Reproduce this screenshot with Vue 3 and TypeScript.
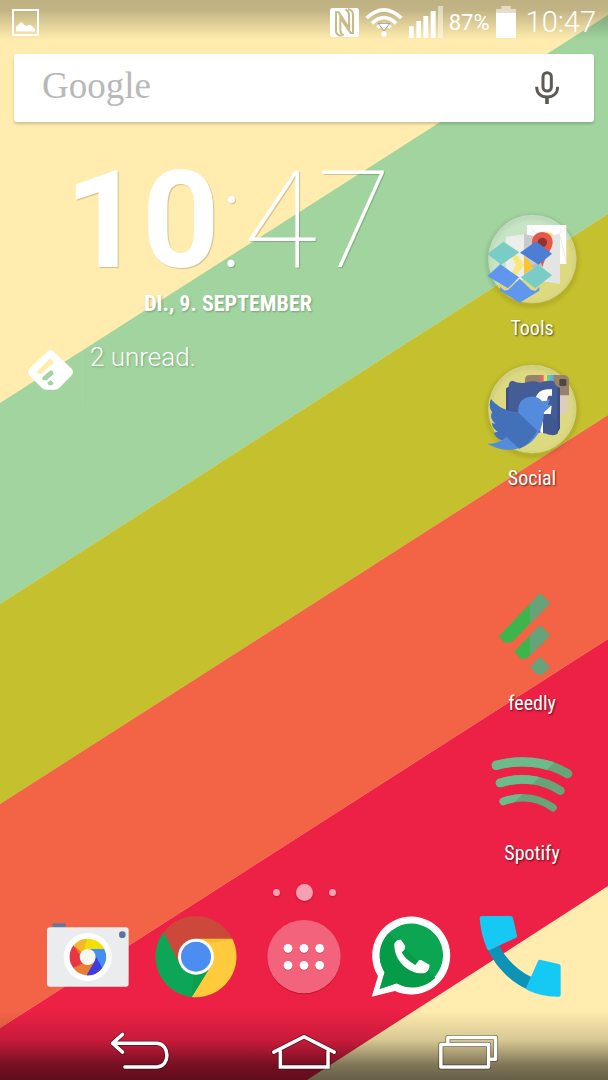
<script setup lang="ts">
import { ref } from 'vue'

const time = { hours: '10', minutes: '47' }
const battery = 87
const query = ref('')
const activePage = ref(1)
</script>

<template>
  <main class="screen">
    <svg class="wallpaper" viewBox="0 0 608 1080" preserveAspectRatio="none" aria-hidden="true">
      <rect width="608" height="1080" fill="#ffecae" />
      <path d="M0 403 608 15V214L0 604Z" fill="#a1d49e" />
      <path d="M0 604 608 214V415L0 804Z" fill="#c5c02d" />
      <path d="M0 804 608 415V639L0 1028Z" fill="#f36447" />
      <path d="M0 1028 608 639V886L307 1080H0Z" fill="#ed2045" />
    </svg>

    <header class="status">
      <svg class="status-picture" viewBox="0 0 27 27" aria-label="Screenshot saved">
        <rect x="1" y="1" width="25" height="25" fill="none" stroke="#fff" stroke-width="2" />
        <path d="M4 22V18L9 13 14 17 18 15.500 23 20V22.500H4Z" fill="#fff" />
      </svg>
      <span class="status-gap"></span>
      <svg class="status-nfc" viewBox="0 0 87 87" aria-label="NFC">
        <rect width="87" height="87" rx="8" fill="#fff" />
        <g fill="none" stroke="#c9b987" stroke-width="6">
          <path d="M35 83Q18 82 18 68V13H26L57 60V20Q56 8 46 4" />
          <path d="M54 4Q69 7 69 20V75H62L31 30V66Q31 77 41 82" />
        </g>
      </svg>
      <svg class="status-wifi" viewBox="0 0 114 90" aria-label="Wi-Fi">
        <g fill="none" stroke="#fff" stroke-width="11">
          <path d="M5 33Q57-16 109 33" />
          <path d="M21 49Q57 15 93 49" />
          <path d="M37 62Q57 42 77 62" />
        </g>
        <path d="M40 49H74L57 72Z" fill="#fff" stroke="#777064" stroke-width="2" />
        <circle cx="57" cy="81" r="8" fill="#fff" />
      </svg>
      <svg class="status-signal" viewBox="0 0 102 96" aria-label="Signal">
        <path fill="#fff" d="M0 61H14V96H0ZM22 45H36V96H22ZM43 30H58V96H43ZM65 15H80V96H65Z" />
        <path fill="#fff" fill-opacity=".5" d="M87 0H102V96H87Z" />
      </svg>
      <span class="status-percent">{{ battery }}%</span>
      <svg class="status-battery" viewBox="0 0 60 96" aria-label="Battery">
        <path fill="#fff" fill-opacity=".55" d="M16 0H44V9H60V21H0V9H16Z" />
        <path fill="#fff" d="M0 21H60V96H0Z" />
      </svg>
      <time class="status-time">{{ time.hours }}:{{ time.minutes }}</time>
    </header>

    <form class="search" role="search" @submit.prevent>
      <input v-model="query" class="search-input" type="text" placeholder="Google" aria-label="Google" />
      <button class="search-mic" type="button" aria-label="Voice search">
        <svg viewBox="0 0 72 102" aria-hidden="true">
          <g fill="none" stroke="#5d5b54" stroke-width="9">
            <rect x="24" y="5" width="25" height="55" rx="12" />
            <path d="M5 47C5 68 18 78 36 78S68 68 68 47" />
            <path d="M36 78V99" stroke-width="11" />
          </g>
        </svg>
      </button>
    </form>

    <div class="workspace">
      <section class="widgets">
        <time class="clock"><b>{{ time.hours }}</b><span>:{{ time.minutes }}</span></time>
        <p class="date">DI., 9. SEPTEMBER</p>
        <a class="unread" href="#feedly">
          <span class="unread-icon">
            <svg viewBox="0 0 136 120" aria-hidden="true">
              <path fill="#fff" fill-rule="evenodd" d="M58 5Q68-4 78 5L132 56Q140 66 132 76L95 114Q89 120 81 120H55Q47 120 41 114L4 76Q-4 66 4 56ZM65 27 28 64Q26 69 31 72H40L77 39Q76 28 65 27ZM68 60 43 83Q42 89 47 91H56L77 73Q77 61 68 60ZM68 90 58 99 63 106H73L78 99Z" />
            </svg>
          </span>
          <span class="unread-text">2 unread.</span>
        </a>
      </section>

      <nav class="shortcuts" aria-label="Shortcuts">
        <div class="group">
          <button class="shortcut" type="button">
            <svg viewBox="36 30 300 300" aria-hidden="true">
              <circle class="folder-shade" cx="187" cy="183" r="133" />
              <circle class="folder" cx="187" cy="177" r="132" />
              <path d="M171 75H289V192H171Z" fill="#fff" />
              <path d="M182 84 230 128 289 84M270 108 289 187" fill="none" stroke="#e1e3da" stroke-width="2" />
              <path d="M108 110 162 103V238L108 250Z" fill="#eceee9" />
              <path d="M162 103 216 112V246L162 238Z" fill="#cacaca" />
              <path d="M216 112 270 103V252L216 244Z" fill="#e4e4e2" />
              <path d="M124 166H143L163 195 139 225H122L138 196Z" fill="#fae779" />
              <path d="M162 168 193 202 162 221Z" fill="#fac42e" />
              <path d="M181 199 207 185V209Z" fill="#b7bac0" />
              <path d="M226 98Q240 94 251 105L239 113Z" fill="#f9df59" />
              <path d="M217 96C200 96 186 109 186 126C186 149 208 166 217 202C226 166 248 149 248 126C248 109 234 96 217 96Z" fill="#e65849" />
              <circle cx="217" cy="127" r="14" fill="#91332f" />
              <path d="M52 162 100 125 148 157 94 194ZM152 232 206 194 246 226 196 265Z" fill="#79cdc6" />
              <path d="M150 158 198 124 246 161 206 194Z" fill="#4b7fd3" />
              <path d="M52 228 91 193 147 232 114 265ZM149 236 183 269 196 273 208 261V272L149 308 90 272V261L104 272 115 269Z" fill="#5f97ee" />
            </svg>
            <span>Tools</span>
          </button>
          <button class="shortcut" type="button">
            <svg viewBox="36 30 300 300" aria-hidden="true">
              <circle class="folder-shade" cx="187" cy="183" r="133" />
              <circle class="folder" cx="187" cy="177" r="132" />
              <rect x="165" y="75" width="131" height="117" rx="14" fill="#ddceb8" />
              <path d="M165 90Q165 75 180 75H281Q296 75 297 90V136H165Z" fill="#98836a" />
              <path d="M211 75H221V94H211Z" fill="#ec6471" />
              <path d="M221 75H231V94H221Z" fill="#e9df65" />
              <path d="M231 75H240V94H231Z" fill="#63ce98" />
              <path d="M240 75H250V94H240Z" fill="#62afe5" />
              <rect x="268" y="87" width="21" height="21" rx="4" fill="#50483f" />
              <path d="M108 119Q108 113 116 111Q115 94 128 92Q147 102 165 98Q190 90 209 98Q234 90 252 93Q257 111 270 113V235Q264 239 262 251Q251 258 242 254Q222 252 215 247Q174 258 134 248Q119 250 119 238Q108 235 108 224Z" fill="#455d97" />
              <path d="M116 111V241Q108 235 108 224V119Q108 113 116 111ZM262 111 270 114V235L262 249Z" fill="#3b4e86" />
              <path d="M211 247V192H196V168H195Q192 118 237 118H246V137H238Q232 138 232 149V168H245L242 192H232V253Z" fill="#fff" />
              <path d="M219 192H242L262 215 262 251Q251 258 219 249Z" fill="#405792" />
              <path d="M52 281Q78 282 96 271Q77 264 72 249L84 245Q67 235 66 219Q71 222 77 222Q57 203 67 187Q54 169 63 148Q91 183 145 188Q142 145 181 140Q205 138 216 154Q231 154 241 147Q237 161 229 168L246 163Q237 176 222 187C220 237 195 286 139 297Q92 305 52 281Z" fill="#548bdc" />
              <path d="M63 148Q91 183 145 188L202 242Q177 286 148 296L109 261 96 271Q77 264 72 249L84 245Q67 235 66 219L77 222Q57 203 67 187Q54 169 63 148Z" fill="#4270b9" />
            </svg>
            <span>Social</span>
          </button>
        </div>
        <div class="group">
          <button class="shortcut" type="button">
            <svg viewBox="36 15 300 300" aria-hidden="true">
              <path d="M86 169 207 43Q210 39 214 43L240 70 129 183Q123 188 115 188H108Q102 188 99 184ZM133 214 205 140Q210 135 215 140L240 166 175 231Q169 237 162 236H156Q150 236 146 231Z" fill="#3eb54b" />
              <path d="M180 71 207 43Q210 39 214 43L240 70 180 131ZM180 166 205 140Q210 135 215 140L240 166 180 226ZM180 261 206 234Q210 230 214 234L240 261 223 279Q219 284 213 284H206Q200 284 196 279Z" fill="#66a37b" />
            </svg>
            <span>feedly</span>
          </button>
          <button class="shortcut" type="button">
            <svg viewBox="36 -15 300 300" aria-hidden="true">
              <g fill="none" stroke-linecap="round" stroke="#65a578">
                <path d="M79 76C149 57 228 63 293 101" stroke-width="28" />
                <path d="M90 129C153 109 218 117 271 152" stroke-width="26" />
                <path d="M100 184C154 165 205 172 249 203" stroke-width="23" />
              </g>
              <clipPath id="spotify-light">
                <path d="M50 40H280L120 200H50Z" />
              </clipPath>
              <g fill="none" stroke-linecap="round" stroke="#6dbb8a" clip-path="url(#spotify-light)">
                <path d="M79 76C149 57 228 63 293 101" stroke-width="28" />
                <path d="M90 129C153 109 218 117 271 152" stroke-width="26" />
                <path d="M100 184C154 165 205 172 249 203" stroke-width="23" />
              </g>
            </svg>
            <span>Spotify</span>
          </button>
        </div>
      </nav>
    </div>

    <div class="pages" role="group" aria-label="Pages">
      <button
        v-for="(page, i) in 3"
        :key="page"
        class="page"
        :class="{ active: i === activePage }"
        type="button"
        :aria-label="`Page ${page}`"
        @click="activePage = i"
      ></button>
    </div>

    <nav class="dock" aria-label="Dock">
      <button type="button" aria-label="Camera">
        <svg viewBox="39 126 270 270" aria-hidden="true">
          <path d="M68 160H107V175H68Z" fill="#65779e" />
          <rect x="51" y="172" width="245" height="178" rx="9" fill="#eaecee" />
          <circle cx="277" cy="194" r="10" fill="#61739c" />
          <circle cx="173" cy="261" r="72" fill="#fff" />
          <circle cx="173" cy="261" r="50" fill="#e97d31" />
          <path d="M173 261 131 226A55 55 0 0 1 171 206L173 238Z" fill="#f4b82b" />
          <path d="M162 239 171 206A55 55 0 0 1 224 238H173Z" fill="#f3df04" />
          <path d="M173 237H223A55 55 0 0 1 217 294L194 261Z" fill="#438ff2" />
          <path d="M195 254 217 294A55 55 0 0 1 169 316L190 278Z" fill="#403ce0" />
          <path d="M195 272 169 316A55 55 0 0 1 130 294L160 274Z" fill="#e97d31" />
          <path d="M166 276 130 294A55 55 0 0 1 131 226L155 264Z" fill="#e63745" />
          <circle cx="173" cy="261" r="24" fill="#f7f7f2" />
        </svg>
      </button>
      <button type="button" aria-label="Chrome">
        <svg viewBox="363 126 270 270" aria-hidden="true">
          <circle cx="498" cy="260" r="122" fill="#cc483a" />
          <path d="M498 206H607A122 122 0 0 1 485 381L544 285Z" fill="#ffca3b" />
          <path d="M401 187A122 122 0 0 0 485 381L544 285 498 312 447 278Z" fill="#0ca656" />
          <path d="M491 317 544 285 485 381Z" fill="#0ba04d" />
          <path d="M515 207H607L544 220Z" fill="#f4bf38" />
          <circle cx="498" cy="260" r="54" fill="#fff" />
          <circle cx="498" cy="260" r="45" fill="#4b8df1" />
        </svg>
      </button>
      <button type="button" aria-label="All apps">
        <svg viewBox="27 126 270 270" aria-hidden="true">
          <circle cx="162" cy="263" r="110" fill="#b91634" />
          <circle cx="162" cy="260" r="110" fill="#f3647c" />
          <g fill="#c84c60">
            <circle cx="114" cy="238" r="13" /><circle cx="162" cy="238" r="13" /><circle cx="209" cy="238" r="13" />
            <circle cx="114" cy="289" r="13" /><circle cx="162" cy="289" r="13" /><circle cx="209" cy="289" r="13" />
          </g>
          <g fill="#fff">
            <circle cx="114" cy="235" r="13" /><circle cx="162" cy="235" r="13" /><circle cx="209" cy="235" r="13" />
            <circle cx="114" cy="286" r="13" /><circle cx="162" cy="286" r="13" /><circle cx="209" cy="286" r="13" />
          </g>
        </svg>
      </button>
      <button type="button" aria-label="WhatsApp">
        <svg viewBox="351 126 270 270" aria-hidden="true">
          <path d="M365 380 384 318A117 117 0 1 1 435 363Z" fill="#fff" />
          <path d="M389 357 404 307A95 95 0 1 1 440 340Z" fill="#0ca552" />
          <path d="M389 357 404 307A95 95 0 0 1 416 190L556 323A95 95 0 0 1 440 340Z" fill="#069b49" />
          <path d="M433 221Q439 208 453 209L466 229 463 240 455 247Q466 269 496 285L507 271Q512 268 519 273L539 285Q539 300 525 309C489 317 431 281 433 221Z" fill="#fff" />
        </svg>
      </button>
      <button type="button" aria-label="Phone">
        <svg viewBox="45 126 270 270" aria-hidden="true">
          <path d="M83 238 119 229C138 268 174 301 214 321L200 357C153 338 105 288 83 238Z" fill="#0d93b8" />
          <path d="M65 138H152Q158 138 159 144L171 197Q172 201 168 203L90 240Q84 243 81 236Q62 192 59 144Q59 138 65 138ZM233 275Q236 268 243 270L296 282Q301 283 302 289V374Q302 380 296 380Q245 381 202 360Q196 357 199 352Z" fill="#15c9f4" />
        </svg>
      </button>
    </nav>

    <nav class="system" aria-label="System">
      <button type="button" aria-label="Back">
        <svg viewBox="271 52 180 129" aria-hidden="true">
          <g fill="none" stroke-linecap="round" stroke-linejoin="round">
            <path d="M316 89 290 112 316 135M290 112H405C439 114 439 173 405 173H322" stroke="#00000070" stroke-width="13" />
            <path d="M316 89 290 112 316 135M290 112H405C439 114 439 173 405 173H322" stroke="#fff" stroke-width="9" />
          </g>
        </svg>
      </button>
      <button type="button" aria-label="Home">
        <svg viewBox="694 52 180 129" aria-hidden="true">
          <g fill="none" stroke-linecap="round">
            <path d="M706 135 784 95 862 135M723 133V173H846V133" stroke="#00000070" stroke-width="13" />
            <path d="M706 135 784 95 862 135M723 133V173H846V133" stroke="#fff" stroke-width="9" />
          </g>
        </svg>
      </button>
      <button type="button" aria-label="Recent apps">
        <svg viewBox="1117 52 180 129" aria-hidden="true">
          <g fill="none" stroke-linejoin="round">
            <path d="M1137 115H1260V173H1137ZM1155 115V97H1278V153H1260" stroke="#00000070" stroke-width="13" />
            <path d="M1137 115H1260V173H1137ZM1155 115V97H1278V153H1260" stroke="#fff" stroke-width="9" />
          </g>
        </svg>
      </button>
    </nav>
  </main>
</template>

<style>
body {
  margin: 0;
}
</style>

<style scoped>
.screen {
  position: relative;
  isolation: isolate;
  display: flex;
  flex-direction: column;
  min-height: 100vh;
  overflow: hidden;
  color: #fff;
  font-family: Roboto, "Noto Sans", sans-serif;
}

.wallpaper {
  position: absolute;
  inset: 0;
  z-index: -1;
  width: 100%;
  height: 100%;
}

svg {
  display: block;
  flex: none;
}

button {
  padding: 0;
  border: 0;
  background: none;
  color: inherit;
  font: inherit;
  cursor: pointer;
}

.status {
  display: flex;
  align-items: center;
  gap: 6px;
  height: 44px;
  padding: 0 12px;
  background: linear-gradient(#00000040, #0000003d 10px, #00000000 40px);
  font-weight: 300;
}

.status-gap {
  flex: 1;
}

.status-picture {
  width: 27px;
  height: 27px;
}

.status-nfc {
  width: 29px;
  height: 29px;
}

.status-wifi {
  width: 38px;
  height: 30px;
}

.status-signal {
  width: 34px;
  height: 32px;
}

.status-percent {
  font-size: 22px;
  font-weight: 400;
}

.status-battery {
  width: 20px;
  height: 32px;
}

.status-time {
  margin-left: 4px;
  font-size: 29px;
}

.search {
  display: flex;
  align-items: center;
  height: 68px;
  margin: 10px 14px 0;
  border-radius: 3px;
  background: #fff;
  box-shadow: 0 2px 3px #00000030;
}

.search-input {
  flex: 1;
  min-width: 0;
  height: 60px;
  padding: 0 0 6px 28px;
  border: 0;
  outline: 0;
  background: none;
  color: #555;
  font: 37px "Liberation Serif", serif;
}

.search-input::placeholder {
  color: #b8b8b8;
  opacity: 1;
}

.search-mic {
  padding: 0 35px;
}

.search-mic svg {
  width: 24px;
  height: 34px;
}

.workspace {
  display: grid;
  grid-template-columns: 1fr 152px;
  flex: 1;
}

.widgets {
  padding-top: 39px;
}

.clock {
  display: block;
  font-size: 135px;
  line-height: 120px;
  text-align: center;
  text-shadow: 1px 1px 1px #00000030;
}

.clock b {
  font-weight: 700;
}

.clock span {
  font-weight: 100;
}

.date {
  margin: 9px 0 0;
  font: 700 22px/28px "Roboto Condensed", "Liberation Sans Narrow", Roboto, sans-serif;
  text-align: center;
  text-shadow: 1px 1px 2px #00000040;
}

.unread {
  display: flex;
  height: 72px;
  margin: 15px 16px 0 28px;
  color: inherit;
  text-decoration: none;
}

.unread-icon {
  padding: 17px 9px 0 0;
  border-right: 1px solid #ffffff10;
}

.unread-icon svg {
  width: 45px;
  height: 40px;
}

.unread-text {
  padding: 9px 0 0 7px;
  font-size: 26px;
  font-weight: 300;
  line-height: 30px;
  text-shadow: 1px 1px 2px #00000038;
}

.shortcuts {
  display: flex;
  flex-direction: column;
  gap: 95px;
  padding-top: 88px;
}

.group {
  display: flex;
  flex-direction: column;
  align-items: center;
  gap: 20px;
}

.shortcut {
  display: flex;
  flex-direction: column;
  align-items: center;
  gap: 6px;
  font: 20px/24px "Roboto Condensed", "Liberation Sans Narrow", Roboto, sans-serif;
  text-shadow: 1px 1px 2px #000000a0;
}

.shortcut svg {
  width: 100px;
  height: 100px;
  overflow: visible;
}

.folder {
  fill: #ffffff66;
  stroke: #ffffff28;
  stroke-width: 3px;
}

.folder-shade {
  fill: none;
  stroke: #00000030;
  stroke-width: 8px;
  filter: blur(6px);
}

.pages {
  display: flex;
  align-items: center;
  justify-content: center;
  gap: 16px;
  height: 20px;
  margin-top: 17px;
}

.page {
  width: 7px;
  height: 7px;
  border-radius: 50%;
  background: #f7a0b1;
  box-shadow: 0 1px 2px #00000040;
}

.page.active {
  width: 17px;
  height: 17px;
}

.dock {
  display: grid;
  grid-template-columns: repeat(5, 1fr);
  justify-items: center;
  margin-top: 10px;
  padding: 0 34px 8px;
}

.dock svg {
  width: 90px;
  height: 90px;
}

.system {
  display: grid;
  grid-template-columns: repeat(3, 1fr);
  place-items: center;
  height: 70px;
  padding: 0 58px;
  background: linear-gradient(#00000000, #00000028 30px, #00000080 55px, #00000098);
}

.system svg {
  width: 70px;
  height: 50px;
}
</style>
